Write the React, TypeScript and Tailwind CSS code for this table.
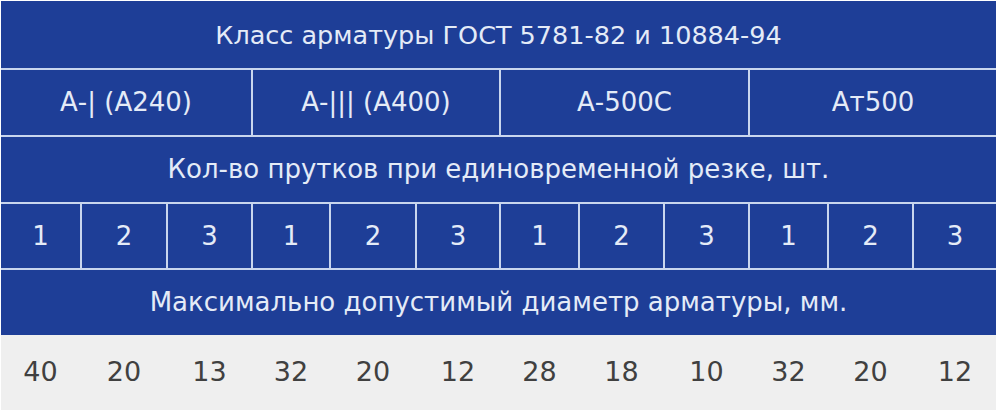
const groups = ["А-| (А240)", "А-||| (А400)", "А-500С", "Ат500"];
const counts = [1, 2, 3, 1, 2, 3, 1, 2, 3, 1, 2, 3];
const diameters = [40, 20, 13, 32, 20, 12, 28, 18, 10, 32, 20, 12];

const cols =
  "grid grid-cols-[79px_84px_83px_76px_84px_82px_77px_83px_83px_77px_83px_82px] gap-x-[2px]";

export default function App() {
  return (
    <div
      className="w-[1000px] h-[410px] bg-white pt-px pl-px overflow-hidden"
      style={{ fontFamily: '"DejaVu Sans", "Noto Sans", sans-serif' }}
    >
      <div className="w-[995px]">
        <div className="flex flex-col gap-y-[2px] bg-[#c9d6ee] text-[#e4ebf7] text-[26px]">
          <div className="h-[67px] bg-[#1e3e97] flex items-center justify-center pt-[2px] text-[25.5px]">
            Класс арматуры ГОСТ 5781-82 и 10884-94
          </div>
          <div className={`${cols} h-[65px]`}>
            {groups.map((g) => (
              <div key={g} className="col-span-3 bg-[#1e3e97] flex items-center justify-center">
                {g}
              </div>
            ))}
          </div>
          <div className="h-[65px] bg-[#1e3e97] flex items-center justify-center">
            Кол-во прутков при единовременной резке, шт.
          </div>
          <div className={`${cols} h-[64px]`}>
            {counts.map((c, i) => (
              <div key={i} className="bg-[#1e3e97] flex items-center justify-center">
                {c}
              </div>
            ))}
          </div>
          <div className="h-[65px] bg-[#1e3e97] flex items-center justify-center">
            Максимально допустимый диаметр арматуры, мм.
          </div>
        </div>
        <div className={`${cols} h-[75px] bg-[#efefef] text-[#404040] text-[27px]`}>
          {diameters.map((d, i) => (
            <div key={i} className="flex items-center justify-center">
              {d}
            </div>
          ))}
        </div>
      </div>
    </div>
  );
}
